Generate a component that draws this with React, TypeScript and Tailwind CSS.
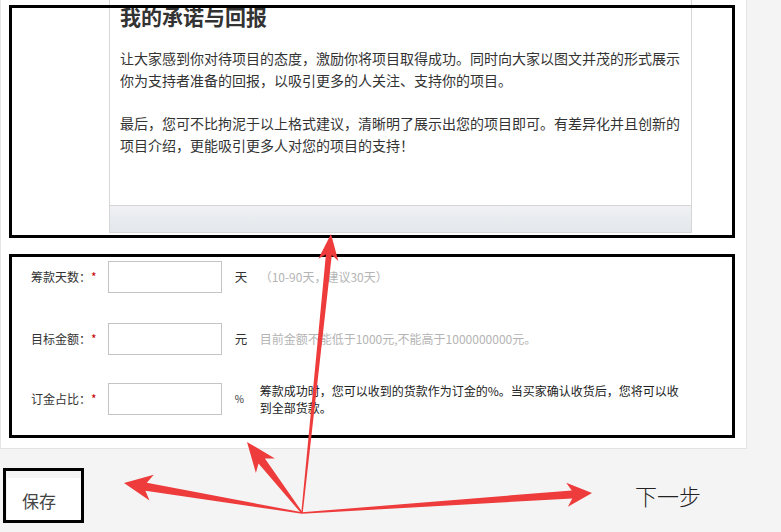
type P = [number, number];

// tapered annotation arrow, drawn as one polygon
function arrowPoints(o: P, t: P, w0: number, w1: number, hl: number, hw: number) {
  const dx = t[0] - o[0];
  const dy = t[1] - o[1];
  const len = Math.hypot(dx, dy);
  const ux = dx / len;
  const uy = dy / len;
  const nx = -uy;
  const ny = ux;
  const bx = t[0] - ux * hl;
  const by = t[1] - uy * hl;
  const sx = t[0] - ux * hl * 0.8;
  const sy = t[1] - uy * hl * 0.8;
  const pts: P[] = [
    [o[0] + (nx * w0) / 2, o[1] + (ny * w0) / 2],
    [sx + (nx * w1) / 2, sy + (ny * w1) / 2],
    [bx + (nx * hw) / 2, by + (ny * hw) / 2],
    t,
    [bx - (nx * hw) / 2, by - (ny * hw) / 2],
    [sx - (nx * w1) / 2, sy - (ny * w1) / 2],
    [o[0] - (nx * w0) / 2, o[1] - (ny * w0) / 2],
  ];
  return pts.map((p) => p.map((v) => v.toFixed(1)).join(",")).join(" ");
}

const origin: P = [302, 513];
const arrows = [
  arrowPoints(origin, [331, 234], 1.5, 6, 26, 20),
  arrowPoints(origin, [247, 442], 1.5, 8, 30, 24),
  arrowPoints(origin, [124, 483], 1.5, 8, 28, 26),
  arrowPoints(origin, [592, 493], 1.5, 8, 25, 24),
];

const rows = [
  { label: "筹款天数：", unit: "天", hint: "（10-90天，建议30天）", dark: false, gap: "mt-0" },
  { label: "目标金额：", unit: "元", hint: "目前金额不能低于1000元,不能高于1000000000元。", dark: false, gap: "mt-[30px]" },
  {
    label: "订金占比：",
    unit: "%",
    hint: "筹款成功时，您可以收到的货款作为订金的%。当买家确认收货后，您将可以收到全部货款。",
    dark: true,
    gap: "mt-[28px]",
  },
];

export default function App() {
  return (
    <div className="relative w-[781px] h-[532px] overflow-hidden bg-[#f4f4f4] text-[#333] [font-family:'Noto_Sans_CJK_SC','Noto_Sans',sans-serif]">
      {/* white card */}
      <div className="w-[747px] h-[449px] bg-white border-l border-r border-b border-[#e4e4e4] flex flex-col">
        {/* editor preview */}
        <div className="pl-[108px]">
          <div className="w-[583px] h-[233px] border-l border-r border-b border-[#d6d6d6] flex flex-col">
            <div className="flex-1 px-[10px] pt-[2px]">
              <h2 className="text-[21px] leading-[28px] font-bold text-[#333]">我的承诺与回报</h2>
              <p className="mt-[18px] w-[562px] text-[14px] leading-[21.5px]">
                让大家感到你对待项目的态度，激励你将项目取得成功。同时向大家以图文并茂的形式展示你为支持者准备的回报，以吸引更多的人关注、支持你的项目。
              </p>
              <p className="mt-[22px] w-[562px] text-[14px] leading-[21.5px]">
                最后，您可不比拘泥于以上格式建议，清晰明了展示出您的项目即可。有差异化并且创新的项目介绍，更能吸引更多人对您的项目的支持！
              </p>
            </div>
            <div className="h-[27px] border-t border-[#d6d6d6] bg-gradient-to-b from-[#eff1f4] to-[#e4e7eb]" />
          </div>
        </div>

        {/* funding form */}
        <div className="pt-[28px] flex flex-col">
          {rows.map((r) => (
            <div key={r.label} className={`flex items-center h-[32px] pl-[30px] ${r.gap}`}>
              <span className="text-[12px] leading-[16px] text-[#333]">{r.label}</span>
              <span className="text-[12px] leading-[16px] text-[#c40000]">*</span>
              <input type="text" className="ml-[11px] w-[114px] h-[32px] border border-[#c4c4c4] bg-white outline-none" />
              <span className={`ml-[13px] w-[12px] leading-[16px] text-[#333] ${r.unit === "%" ? "text-[10px]" : "text-[12.5px]"}`}>
                {r.unit}
              </span>
              <span
                className={`ml-[13px] text-[12px] leading-[17.5px] ${
                  r.dark ? "w-[424px] text-[12.5px] text-[#222]" : "text-[#b4b4b4]"
                }`}
              >
                {r.hint}
              </span>
            </div>
          ))}
        </div>
      </div>

      {/* bottom actions */}
      <div className="flex items-start pt-[29px]">
        <button className="ml-[7px] w-[74px] h-[42px] bg-white rounded-[2px] shadow-[1px_2px_2px_rgba(0,0,0,0.12)] text-[17px] text-[#444] text-left pl-[15px] pt-[3px]">
          保存
        </button>
        <span className="ml-[554px] mt-[3px] text-[22px] leading-[28px] font-light text-[#222]">下一步</span>
      </div>

      {/* annotation rectangles */}
      <div className="absolute left-[9px] top-[5px] w-[726px] h-[233px] border-[3px] border-black pointer-events-none" />
      <div className="absolute left-[9px] top-[254px] w-[726px] h-[184px] border-[3px] border-black pointer-events-none" />
      <div className="absolute left-[3px] top-[468px] w-[81px] h-[55px] border-[3px] border-black pointer-events-none" />

      {/* annotation arrows */}
      <svg className="absolute left-0 top-0 pointer-events-none" width="781" height="532" viewBox="0 0 781 532">
        {arrows.map((pts, i) => (
          <polygon key={i} points={pts} fill="#ee3b3b" />
        ))}
      </svg>
    </div>
  );
}
